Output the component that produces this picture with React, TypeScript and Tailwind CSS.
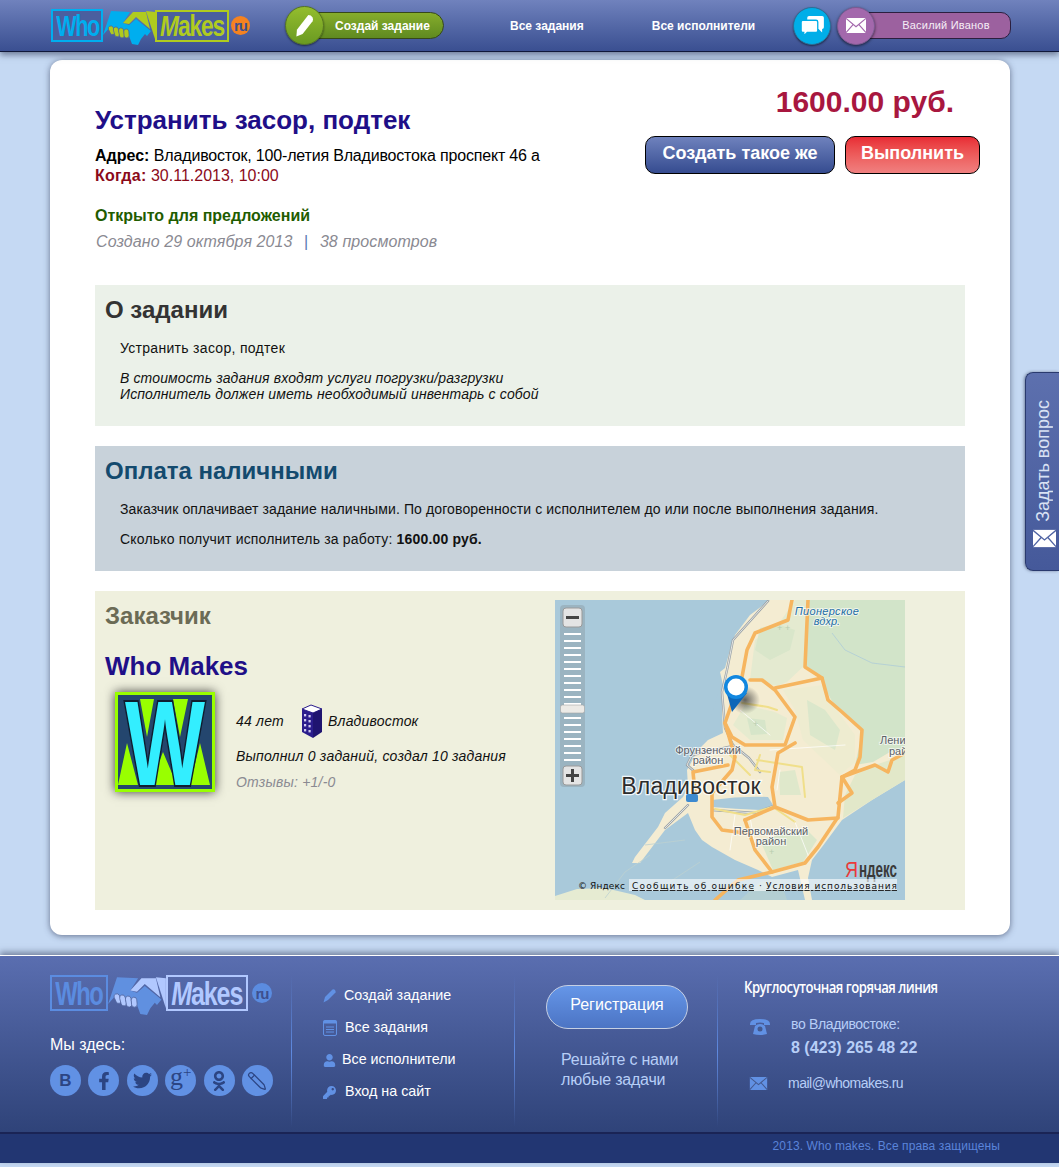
import React from 'react';
import { FaFacebookF, FaTwitter, FaOdnoklassniki, FaUser, FaKey } from 'react-icons/fa';
import { Pencil } from 'lucide-react';

const Envelope = ({ className, line }: { className?: string; line: string }) => (
  <svg viewBox="0 0 24 18" className={className}>
    <rect x="0" y="0" width="24" height="18" fill="currentColor" />
    <path d="M0 0.5 L12 10.5 L24 0.5 M0 17.5 L8.5 8 M24 17.5 L15.5 8" fill="none" stroke={line} strokeWidth="1.4" />
  </svg>
);

const Handshake = ({ left, right, bg, className }: { left: string; right: string; bg: string; className?: string }) => (
  <svg viewBox="0 0 52 36" className={className}>
    <path d="M0 26 L8 2 L27 3 L20 14 L26 16 L33 10 L48 22 L44 27 L42 25 L38 30 L35 36 L29 35 L26 27 L18 24 L8 17 Z" fill={left} />
    <path d="M43 2 L52 3 L52 30 Z" fill={right} />
    <path d="M30 3 L43 3 L47 20 L33 8 L26 15 L20 14 Z" fill={right} />
    <g fill={right} stroke={bg} strokeWidth="0.7">
      <rect x="6" y="17" width="5" height="9" rx="2.5" transform="rotate(-25 8 21)" />
      <rect x="11" y="18" width="5" height="10" rx="2.5" transform="rotate(-15 13 23)" />
      <rect x="16" y="19" width="5" height="10" rx="2.5" transform="rotate(-10 18 24)" />
      <rect x="21" y="20" width="5" height="9" rx="2.5" transform="rotate(-5 23 25)" />
    </g>
  </svg>
);

const HeaderLogo = () => (
  <div className="flex items-center w-[201px] h-[33px] shrink-0">
    <div className="w-[52px] h-[33px] border-2 border-[#00aeef] bg-[#4a5f9f] flex items-center justify-center">
      <span className="shrink-0 text-[30px] leading-none font-bold text-[#00aeef] tracking-[-2px] scale-x-[0.72]">Who</span>
    </div>
    <Handshake left="#00aeef" right="#b0cb1f" bg="#4a5f9f" className="w-[52px] h-[36px] mt-[3px]" />
    <div className="w-[74px] h-[32px] border-2 border-[#b0cb1f] bg-[#4a5f9f] flex items-center justify-center">
      <span className="shrink-0 text-[30px] leading-none font-bold text-[#b0cb1f] tracking-[-1.5px] scale-x-[0.76]"><i>M</i>akes</span>
    </div>
    <div className="ml-[2px] w-[19px] h-[19px] rounded-full bg-[#f58220] flex items-center justify-center text-[15px] leading-none font-bold text-[#3d4f8f] tracking-[-1px]">ru</div>
  </div>
);

const FooterLogo = () => (
  <div className="flex items-center h-[36px]">
    <div className="w-[58px] h-[36px] border-2 border-[#5b8ce0] flex items-center justify-center">
      <span className="shrink-0 text-[33px] leading-none font-bold text-[#5b8ce0] tracking-[-2px] scale-x-[0.72]">Who</span>
    </div>
    <Handshake left="#6090e0" right="#b1c8ff" bg="#51659f" className="w-[58px] h-[40px] mt-[3px]" />
    <div className="w-[82px] h-[36px] border-2 border-[#b1c8ff] flex items-center justify-center">
      <span className="shrink-0 text-[33px] leading-none font-bold text-[#b1c8ff] tracking-[-1.5px] scale-x-[0.76]"><i>M</i>akes</span>
    </div>
    <div className="ml-[4px] w-[20px] h-[20px] rounded-full bg-[#5b8ce0] flex items-center justify-center text-[15px] leading-none font-bold text-[#3d4f8f] tracking-[-1px]">ru</div>
  </div>
);

const Header = () => (
  <header className="h-[52px] bg-gradient-to-b from-[#7082bd] to-[#3a4f91] border-b border-[#10183a] shadow-[0_3px_6px_rgba(40,50,80,0.55)] pl-[51px] flex items-center relative text-white">
    <HeaderLogo />
    <div className="ml-[33px] flex items-center">
      <div className="relative z-10 w-[39px] h-[39px] rounded-full bg-gradient-to-b from-[#94bd2d] to-[#6a9a22] border border-[#55751f] shadow-[0_1px_2px_rgba(0,0,0,0.5)] flex items-center justify-center">
        <svg viewBox="0 0 20 24" className="w-[19px] h-[23px]">
          <path d="M14 1 Q17 1 18.5 3.5 Q19.5 5.5 18.5 7.5 L8 21 L1.5 23.5 L2 16.5 Z" fill="#fff" />
        </svg>
      </div>
      <div className="-ml-[10px] w-[130px] h-[27px] rounded-r-[14px] bg-gradient-to-b from-[#86ad2c] to-[#5f8a20] border border-[#36481a] flex items-center pl-[20px] text-[12px] font-bold">
        Создай задание
      </div>
    </div>
    <a className="ml-[66px] text-[12px] font-bold">Все задания</a>
    <a className="ml-[68px] text-[12px] font-bold">Все исполнители</a>
    <div className="ml-[38px] w-[38px] h-[38px] rounded-full bg-[#00aee8] border border-[#2b6f98] shadow-[0_1px_2px_rgba(0,0,0,0.5)] flex items-center justify-center">
      <svg viewBox="0 0 28 24" className="w-[25px] h-[21px]">
        <path d="M10 1 H25 Q27 1 27 3 V14 Q27 16 25 16 L25 20 L21 16 H10 Q8 16 8 14 V3 Q8 1 10 1 Z" fill="#fff" />
        <path d="M3 6 H18 Q20 6 20 8 V18 Q20 20 18 20 H8 L4 24 L4 20 H3 Q1 20 1 18 V8 Q1 6 3 6 Z" fill="#fff" stroke="#00aee8" strokeWidth="1.5" />
      </svg>
    </div>
    <div className="ml-[6px] flex items-center">
      <div className="relative z-10 w-[38px] h-[38px] rounded-full bg-[#a368ac] border border-[#7c5a92] shadow-[0_1px_3px_rgba(0,0,0,0.6)] flex items-center justify-center">
        <Envelope className="w-[22px] h-[15px] text-[#fff]" line="#a368ac" />
      </div>
      <div className="-ml-[10px] w-[146px] h-[27px] rounded-r-[10px] bg-[#9c619f] border border-[#2b1f3f] text-[11px] text-[#f6eef7] flex items-center pl-[36px] tracking-[0.2px]">
        Василий Иванов
      </div>
    </div>
  </header>
);

const Map = () => (
  <svg viewBox="0 0 350 300" className="w-[350px] h-[300px] shrink-0 mt-[9px] bg-[#a9c9da]">
    <defs>
      <radialGradient id="pinShade"><stop offset="0%" stopColor="#333" stopOpacity="0.75" /><stop offset="100%" stopColor="#333" stopOpacity="0" /></radialGradient>
    </defs>
    {/* суша */}
    <path d="M215 0 L195 15 L180 35 L175 50 L170 68 L165 72 L168 85 L167 113 L168 133 L153 140 L143 150 L132 170 L133 187 L128 197 L110 213 L103 227 L80 257 L77 263 L85 263 L110 230 L133 213 L140 230 L147 240 L157 247 L180 260 L203 270 L217 277 L243 270 L250 300 L257 300 L253 278 L257 260 L267 247 L287 220 L317 200 L350 180 L350 0 Z" fill="#f4ecd2" />
    <path d="M253 0 L350 0 L350 150 L335 152 L318 162 L300 165 L308 130 L287 110 L272 100 L268 78 L250 65 Z" fill="#d2e4c9" />
    <path d="M240 0 L253 0 L250 65 L232 82 L222 86 L195 80 L200 40 L225 22 Z" fill="#e4ead0" />
    <path d="M205 28 L222 24 L240 30 L235 50 L215 60 L200 50 Z" fill="#d9e6ca" />
    <path d="M268 85 L285 115 L300 135 L300 162 L285 175 L248 140 L240 110 L228 90 Z" fill="#eeecd0" />
    <path d="M252 100 L270 110 L285 130 L280 150 L255 135 Z" fill="#dbe7cb" />
    <path d="M300 175 L320 165 L350 155 L350 180 L317 200 L288 218 L290 195 Z" fill="#e2e8c9" />
    <path d="M190 105 L220 112 L232 118 L228 140 L195 140 L178 125 Z" fill="#e6ebcf" />
    <path d="M192 118 L210 120 L212 134 L196 135 Z" fill="#d6e5c9" />
    <path d="M205 240 L250 228 L262 240 L248 262 L218 270 Z" fill="#dbe7cb" />
    <path d="M224 172 L240 170 L246 195 L225 195 Z" fill="#dfe8cb" />
    <path d="M0 296 L22 289 L50 288 L80 295 L90 300 L0 300 Z" fill="#e6ebd2" />
    <path d="M185 300 L205 282 L225 279 L232 300 Z" fill="#b4cfd3" />
    <path d="M50 298 L70 272 L95 255 M145 262 L110 285 M90 245 L130 240" fill="none" stroke="#bcd0d0" strokeWidth="0.8" />
    <path d="M150 140 L163 92 M277 33 L290 50 L317 63 L350 67" fill="none" stroke="#a9c9da" strokeWidth="0.7" />
    {/* вода */}
    <path d="M157 200 Q185 196 213 197 L218 205 L205 210 Q180 209 157 207 Z" fill="#a9c9da" />
    {/* жд и дороги */}
    <g fill="none" strokeLinecap="round" strokeLinejoin="round">
      <path d="M213 1 L178 40 L172 70 L167 92 L170 128 L178 145 L194 158 L205 172 M140 172 L132 165 L137 155 L178 146 M157 210 L200 213 L218 206 M110 228 L133 205" stroke="#9ba3a8" strokeWidth="2.4" />
      <path d="M213 1 L178 40 L172 70 L167 92 L170 128 L178 145 L194 158 L205 172 M140 172 L132 165 L137 155 L178 146 M157 210 L200 213 L218 206 M110 228 L133 205" stroke="#f4f4f0" strokeWidth="0.8" />
      <g stroke="#f0df8a" strokeWidth="2">
        <path d="M187 103 L213 107 L222 110 M202 160 L247 167 L250 197 M175 155 L195 175 M160 209 L190 215 L218 207 L240 222 M205 155 L200 170 L215 172" />
      </g>
      <g stroke="#fff" strokeWidth="1" opacity="0.7">
        <path d="M180 215 L175 250 M195 217 L200 245 M225 170 L222 190 M240 222 L255 260 M215 150 L290 145 M185 110 L215 135" />
      </g>
      <g stroke="#f6b55f" strokeWidth="3.6">
        <path d="M237 0 L233 20 L200 33 L192 50 L187 77 L177 103 L170 123 L177 137 L190 145 L230 145 L240 117 L220 90 L207 80 L195 80" />
        <path d="M253 0 L250 67 L267 78 L273 100 L287 112 L307 130 L305 157 L300 170 L287 177 L283 217 L263 247 L250 263 L217 272 L200 250 L190 220" />
        <path d="M220 88 L267 78" />
        <path d="M287 177 L320 165 L333 172 L337 160 L350 153" />
        <path d="M240 143 L223 153 L217 187 L220 207 L253 220 L283 218" />
        <path d="M170 123 L180 157 L177 170 L157 193 L157 217 L167 230 L190 233 M190 220 L220 207" />
        <path d="M138 172 L173 165 M138 172 L140 192" />
        <path d="M287 177 L297 193 L283 203" />
        <path d="M160 300 L183 280 L217 272" />
      </g>
    </g>
    <g fill="#b8cdb0" fontSize="9" fontFamily="Liberation Sans">
      <text x="222" y="31">+</text><text x="230" y="31">+</text><text x="198" y="127">+</text><text x="214" y="255">+</text>
    </g>
    {/* подписи */}
    <g fontFamily="Liberation Sans, sans-serif" paintOrder="stroke" stroke="#ffffff" strokeOpacity="0.65" strokeWidth="2" textAnchor="middle">
      <text x="272" y="15" fontSize="11" fontStyle="italic" fill="#1f6ea6" letterSpacing="0.3">Пионерское</text>
      <text x="272" y="25" fontSize="11" fontStyle="italic" fill="#1f6ea6">вдхр.</text>
      <text x="153" y="154" fontSize="11" fill="#5c6268">Фрунзенский</text>
      <text x="153" y="164" fontSize="11" fill="#5c6268">район</text>
      <text x="216" y="235" fontSize="11" fill="#5c6268">Первомайский</text>
      <text x="216" y="245" fontSize="11" fill="#5c6268">район</text>
      <text x="325" y="144" fontSize="11" fill="#5c6268" textAnchor="start">Лени</text>
      <text x="334" y="155" fontSize="11" fill="#5c6268" textAnchor="start">рай</text>
      <text x="136" y="194" fontSize="23" fill="#2c2c2c" stroke="#fff" strokeOpacity="0.85" strokeWidth="2.5" letterSpacing="0.2">Владивосток</text>
    </g>
    <rect x="131" y="194" width="12" height="8" rx="2" fill="#3d8ad0" />
    {/* метка */}
    <ellipse cx="190" cy="100" rx="15" ry="14" fill="url(#pinShade)" />
    <path d="M172 94 L177 112 L192 93 Z" fill="#0d66b8" />
    <circle cx="181" cy="87" r="12" fill="#1187e0" />
    <circle cx="181" cy="87" r="8.5" fill="#ffffff" />
    {/* масштаб */}
    <rect x="5" y="5" width="25" height="182" rx="4" fill="#8fa3ad" opacity="0.55" />
    <g fill="#fff">
      {[33, 40, 47, 54, 61, 68, 75, 82, 89, 96, 103, 110, 117, 124, 131, 138, 145, 152, 159].map((y) => (
        <rect key={y} x="9" y={y} width="17" height="2" />
      ))}
    </g>
    <rect x="8" y="8" width="19" height="19" rx="3" fill="#e4e4e4" stroke="#9a9a9a" />
    <rect x="11" y="16" width="13" height="3" fill="#444" />
    <rect x="8" y="166" width="19" height="19" rx="3" fill="#e4e4e4" stroke="#9a9a9a" />
    <path d="M11 174 H24 V177 H19 V182 H16 V177 H11 Z M16 169 H19 V174 H16 Z" fill="#444" />
    <rect x="5.5" y="105" width="24" height="8" rx="2" fill="#eceae6" stroke="#a5a5a5" strokeWidth="0.6" />
    {/* яндекс */}
    <text x="290" y="277" fontFamily="Liberation Sans, sans-serif" fontSize="22" fill="#ea3a3a" textLength="13" lengthAdjust="spacingAndGlyphs">Я</text>
    <text x="304" y="277" fontFamily="Liberation Sans, sans-serif" fontSize="22" fontWeight="bold" fill="#3a3a3a" textLength="38" lengthAdjust="spacingAndGlyphs">ндекс</text>
    <rect x="74" y="279" width="268" height="12" fill="#fff" opacity="0.6" />
    <g fontFamily="DejaVu Sans, sans-serif" fontSize="9" fill="#111">
      <text x="23" y="289" textLength="47">© Яндекс</text>
      <text x="77" y="289" textLength="122" textDecoration="underline">Сообщить об ошибке</text>
      <text x="204" y="289">·</text>
      <text x="211" y="289" textLength="131" textDecoration="underline">Условия использования</text>
    </g>
  </svg>
);

const Avatar = () => (
  <div className="w-[100px] h-[100px] shrink-0 bg-[#99ff00] p-[3px] shadow-[0_0_10px_rgba(0,0,0,0.75)]">
    <svg viewBox="0 0 94 94" className="w-full h-full bg-[#24466e]">
      <path d="M22 4 H36 L29 42 Z M55 4 H70 L62 42 Z" fill="#99ff00" />
      <path d="M0 90 H20 L9 48 Z M32 90 H59 L45 57 Z M72 90 H92 L82 48 Z" fill="#99ff00" />
      <text x="47" y="90" textAnchor="middle" fontFamily="Liberation Sans, sans-serif" fontWeight="bold" fontSize="120" fill="#33eeff" stroke="#0f1e30" strokeWidth="4" paintOrder="stroke" textLength="80" lengthAdjust="spacingAndGlyphs">W</text>
    </svg>
  </div>
);

const Building = () => (
  <svg viewBox="0 0 22 34" className="w-[22px] h-[34px] shrink-0">
    <path d="M10 1 L21 5 L12 9 L1 5 Z" fill="#fff" stroke="#2a1c8c" />
    <path d="M1 5 L12 9 V34 L1 28 Z" fill="#2a1c8c" />
    <path d="M12 9 L21 5 V28 L12 34 Z" fill="#1f1470" />
    <g fill="#cfc8f0">
      {[10, 15, 20, 25].map((y) => (
        <g key={y}>
          <rect x="3" y={y} width="2.2" height="2.4" />
          <rect x="7.5" y={y + 1} width="2.2" height="2.4" />
        </g>
      ))}
    </g>
  </svg>
);

const SocialIcon = ({ children }: { children: React.ReactNode }) => (
  <div className="w-[31px] h-[31px] rounded-full bg-[#6191e4] flex items-center justify-center text-[#2c4583]">{children}</div>
);

const Divider = () => <div className="w-px self-stretch bg-gradient-to-b from-transparent via-[#5f8ae0] to-transparent shrink-0" />;

const FooterLink = ({ icon, label, gap }: { icon: React.ReactNode; label: string; gap: string }) => (
  <div className={`flex items-center h-[32px] ${gap}`}>
    <span className="w-[13px] flex justify-center text-[#6191e4]">{icon}</span>
    <span className="text-[14.3px] text-white">{label}</span>
  </div>
);

const Footer = () => (
  <footer className="mt-[20px] border-t-[1px] border-white shadow-[0_-3px_6px_rgba(40,50,80,0.5)]">
    <div className="h-[176px] bg-gradient-to-b from-[#5a6eb0] to-[#2f4379] flex pt-[19px] pb-[5px]">
      <div className="w-[241px] ml-[50px] shrink-0">
        <FooterLogo />
        <p className="mt-[24px] text-[16px] leading-[20px] text-white">Мы здесь:</p>
        <div className="mt-[10px] flex gap-[7.4px]">
          <SocialIcon><span className="text-[17px] font-bold">В</span></SocialIcon>
          <SocialIcon><FaFacebookF size={18} /></SocialIcon>
          <SocialIcon><FaTwitter size={19} /></SocialIcon>
          <SocialIcon><span className="font-['Liberation_Serif'] text-[26px] leading-none -mt-[7px]">g<span className="text-[15px] relative -top-[8px]">+</span></span></SocialIcon>
          <SocialIcon><FaOdnoklassniki size={20} /></SocialIcon>
          <SocialIcon><Pencil size={20} strokeWidth={1.5} className="-scale-x-100" /></SocialIcon>
        </div>
      </div>
      <Divider />
      <div className="w-[222px] shrink-0 pl-[31px] pt-[5px]">
        <FooterLink gap="gap-[8px]" label="Создай задание" icon={
          <svg viewBox="0 0 13 14" className="w-[13px] h-[14px]"><path d="M0.5 13.5 L2 8 L9.5 0.5 Q11 0 12 1 Q13 2.5 12.5 3.5 L5 11 Z" fill="currentColor" /></svg>
        } />
        <FooterLink gap="gap-[9px]" label="Все задания" icon={
          <svg viewBox="0 0 14 16" className="w-[14px] h-[16px] shrink-0"><rect x="0.5" y="0.5" width="13" height="15" rx="1.5" fill="none" stroke="currentColor" /><rect x="0.5" y="0.5" width="13" height="3" fill="currentColor" /><path d="M3 7 H11 M3 9.5 H11 M3 12 H11" stroke="currentColor" /></svg>
        } />
        <FooterLink gap="gap-[6px]" label="Все исполнители" icon={<FaUser size={13} />} />
        <FooterLink gap="gap-[9px]" label="Вход на сайт" icon={<FaKey size={13} />} />
      </div>
      <Divider />
      <div className="w-[202px] shrink-0 pl-[31px] pt-[10px]">
        <div className="w-[142px] h-[44px] rounded-[22px] bg-gradient-to-b from-[#6596e8] to-[#4c74c4] border border-[#c6d0e4] flex items-center justify-center pb-[4px] text-[16px] text-white">Регистрация</div>
        <p className="mt-[21px] ml-[15px] text-[16px] leading-[20px] text-[#b7cef7] tracking-[-0.2px]">Решайте с нами<br />любые задачи</p>
      </div>
      <Divider />
      <div className="pl-[26px] text-[#b7cef7]">
        <p className="mt-[1px] w-[236px] origin-left scale-x-[0.82] text-[16px] leading-[22px] font-semibold text-white font-['Open_Sans'] tracking-[-0.6px] whitespace-nowrap">Круглосуточная горячая линия</p>
        <div className="mt-[17px] flex pl-[5px]">
          <svg viewBox="0 0 22 17" className="w-[22px] h-[17px] mt-[3px] text-[#6191e4]" fill="currentColor">
            <path d="M1 6 Q1 1 11 1 Q21 1 21 6 L21 7 L15 7 L15 5 Q11 4 7 5 L7 7 L1 7 Z" />
            <path d="M6 8 Q8 6 11 6 Q14 6 16 8 L18 16 Q11 18 4 16 Z" /><circle cx="11" cy="11" r="2.5" fill="#44598f" />
          </svg>
          <div className="ml-[20px]">
            <p className="text-[14px] leading-[18px] tracking-[-0.35px]">во Владивостоке:</p>
            <p className="mt-[4px] text-[16px] leading-[22px] font-bold">8 (423) 265 48 22</p>
          </div>
        </div>
        <div className="mt-[14px] flex items-center pl-[5px]">
          <Envelope className="w-[19px] h-[13px] text-[#6191e4]" line="#44598f" />
          <span className="ml-[20px] text-[14px] leading-[20px] tracking-[-0.5px]">mail@whomakes.ru</span>
        </div>
      </div>
    </div>
    <div className="h-[31px] bg-[#223672] border-t-[2px] border-[#1a2455] flex items-center justify-end pr-[59px] pb-[5px] text-[12px] text-[#5a84da] tracking-[0.1px]">
      2013. Who makes. Все права защищены
    </div>
  </footer>
);

export default function App() {
  return (
    <div className="relative min-h-[1167px] overflow-hidden bg-[#c5d9f3] font-['Liberation_Sans',Arial,sans-serif]">
      <Header />

      <main className="ml-[50px] mt-[8px] w-[960px] h-[875px] rounded-xl bg-white shadow-[0_1px_6px_rgba(60,70,100,0.7)] px-[45px] pt-[24px]">
        <div className="flex justify-between">
          <div className="pt-[21px]">
            <h1 className="text-[26px] leading-[30px] font-bold text-[#1f0f88]">Устранить засор, подтек</h1>
            <p className="mt-[11px] text-[16px] leading-[20px] text-black"><b>Адрес:</b> <span className="tracking-[-0.18px]">Владивосток, 100-летия Владивостока проспект 46 а</span></p>
            <p className="text-[16px] leading-[20px] text-[#8b0a1a]"><b className="tracking-[0.25px]">Когда:</b> 30.11.2013, 10:00</p>
            <p className="mt-[20px] text-[16px] leading-[20px] font-bold text-[#1f5c00]">Открыто для предложений</p>
            <p className="mt-[6px] text-[16px] leading-[20px] italic text-[#8a8a92] tracking-[0.1px] pl-px">Создано 29 октября 2013<span className="not-italic text-[#5a7ab0] mx-[11.5px]">|</span>38 просмотров</p>
          </div>
          <div className="-mr-[15px] flex flex-col items-end">
            <div className="pr-[26px] text-[30px] leading-[36px] font-bold text-[#a8173f]">1600.00 руб.</div>
            <div className="mt-[16px] flex gap-[10px]">
              <button className="w-[190px] h-[38px] pb-[4px] rounded-[10px] border border-black bg-gradient-to-b from-[#6f82bd] to-[#364c90] text-white font-bold text-[18px]">Создать такое же</button>
              <button className="w-[135px] h-[38px] pb-[4px] rounded-[10px] border border-black bg-gradient-to-b from-[#e82a34] to-[#f08080] text-white font-bold text-[18px]">Выполнить</button>
            </div>
          </div>
        </div>

        <section className="mt-[33px] h-[141px] bg-[#ebf1e9] pt-[11px] pl-[10px]">
          <h2 className="text-[24px] leading-[28px] font-bold text-[#333]">О задании</h2>
          <p className="mt-[14px] pl-[15px] text-[14px] leading-[20px] text-[#111] tracking-[0.3px]">Устранить засор, подтек</p>
          <p className="mt-[12px] pl-[15px] text-[14px] leading-[16px] italic text-[#111] tracking-[0.13px]">В стоимость задания входят услуги погрузки/разгрузки<br />Исполнитель должен иметь необходимый инвентарь с собой</p>
        </section>

        <section className="mt-[20px] h-[125px] bg-[#c8d2da] pt-[11px] pl-[10px]">
          <h2 className="text-[24px] leading-[28px] font-bold text-[#134a6e]">Оплата наличными</h2>
          <p className="mt-[14px] pl-[15px] text-[14px] leading-[20px] text-[#111] tracking-[0.115px]">Заказчик оплачивает задание наличными. По договоренности с исполнителем до или после выполнения задания.</p>
          <p className="mt-[10px] pl-[15px] text-[14px] leading-[20px] text-[#111] tracking-[0.17px]">Сколько получит исполнитель за работу: <b>1600.00 руб.</b></p>
        </section>

        <section className="mt-[20px] h-[319px] bg-[#eff0de] flex">
          <div className="w-[460px] shrink-0 pl-[10px] pt-[11px]">
            <h2 className="text-[24px] leading-[28px] font-bold text-[#6b6b55]">Заказчик</h2>
            <h3 className="mt-[21px] text-[26px] leading-[30px] font-bold text-[#1f0f88]">Who Makes</h3>
            <div className="mt-[11px] pl-[10px] flex">
              <Avatar />
              <div className="ml-[21px] text-[14px] italic text-[#111] tracking-[0.2px]">
                <div className="mt-[12px] flex items-center h-[34px]">
                  <span className="w-[65px]">44 лет</span>
                  <Building />
                  <span className="ml-[5px]">Владивосток</span>
                </div>
                <p className="mt-[9px] leading-[18px]">Выполнил 0 заданий, создал 10 задания</p>
                <p className="mt-[8px] leading-[18px] text-[#8a8a92]">Отзывы: +1/-0</p>
              </div>
            </div>
          </div>
          <Map />
        </section>
      </main>

      <Footer />

      <aside className="absolute right-0 top-[372px] w-[34px] h-[199px] rounded-l-[8px] border border-r-0 border-[#2a3a6e] bg-gradient-to-b from-[#5d70ae] to-[#45599a] flex flex-col items-center justify-end pb-[22px] shadow-[-1px_0_3px_rgba(40,50,80,0.5)]">
        <span className="[writing-mode:vertical-rl] rotate-180 text-[18px] leading-[20px] text-[#d9e2f4]">Задать вопрос</span>
        <Envelope className="mt-[7px] ml-[4px] w-[23px] h-[19px] text-white" line="#4f63a3" />
      </aside>
    </div>
  );
}
